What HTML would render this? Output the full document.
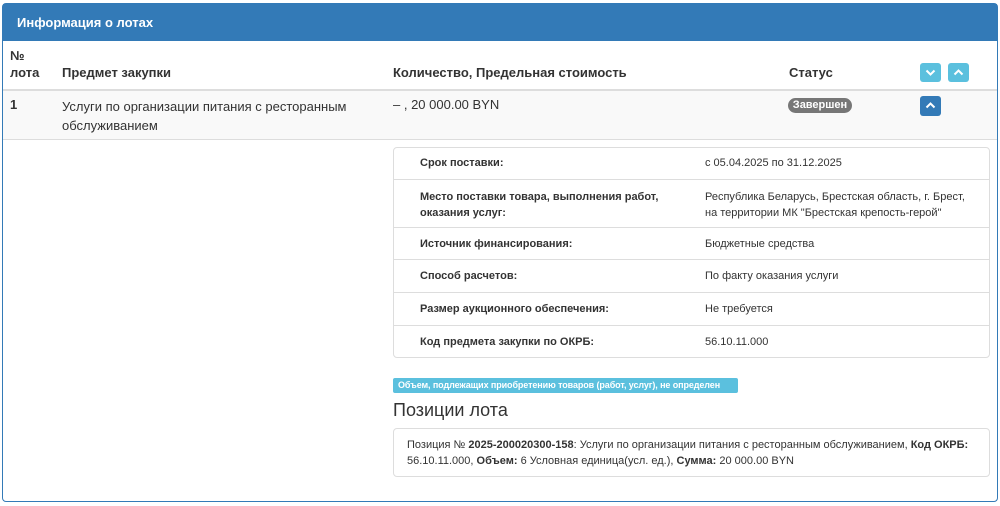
<!DOCTYPE html>
<html><head><meta charset="utf-8"><style>
*{margin:0;padding:0;box-sizing:border-box}
body{width:1000px;height:506px;background:#fff;font-family:"Liberation Sans",Arial,sans-serif;color:#333;position:relative;overflow:hidden}
.a{position:absolute;white-space:nowrap}
.panel{position:absolute;left:2px;top:3px;width:996px;height:499px;border:1px solid #337ab7;border-radius:4px}
.hd{position:absolute;left:0;top:0;right:0;height:37px;background:#337ab7;color:#fff;font-weight:bold;font-size:13px;padding:11px 0 0 14px}
.b{font-weight:bold}
.s13{font-size:13px}
.s11{font-size:11px}
.btn{position:absolute;width:21px;height:19px;border-radius:3px;background:#5bc0de}
.btn svg{position:absolute;left:5px;top:5px}
.line{position:absolute;height:1px;background:#ddd}
</style></head><body>
<div class="panel"><div class="hd">Информация о лотах</div></div>
<div class="a b s13" style="left:10px;top:48px">№</div>
<div class="a b s13" style="left:10px;top:65px">лота</div>
<div class="a b s13" style="left:62px;top:65px">Предмет закупки</div>
<div class="a b s13" style="left:393px;top:65px">Количество, Предельная стоимость</div>
<div class="a b s13" style="left:789px;top:65px">Статус</div>
<div class="btn" style="left:920px;top:63px"><svg width="11" height="9" viewBox="0 0 11 9"><path d="M1.5 2.5l4 4 4-4" stroke="#fff" stroke-width="2" fill="none"/></svg></div>
<div class="btn" style="left:948px;top:63px"><svg width="11" height="9" viewBox="0 0 11 9"><path d="M1.5 6.5l4-4 4 4" stroke="#fff" stroke-width="2" fill="none"/></svg></div>
<div class="line" style="left:3px;width:994px;top:89px;height:2px"></div>
<div class="a" style="left:3px;top:91px;width:994px;height:48px;background:#f9f9f9"></div>
<div class="line" style="left:3px;width:994px;top:139px"></div>
<div class="a b s13" style="left:10px;top:97px">1</div>
<div class="a s13" style="left:62px;top:97px;line-height:19px">Услуги по организации питания с ресторанным<br>обслуживанием</div>
<div class="a s13" style="left:393px;top:97px">– , 20 000.00 BYN</div>
<div class="a b" style="left:788px;top:98px;width:64px;height:15px;border-radius:8px;background:#777;color:#fff;font-size:11px;text-align:center;line-height:15px">Завершен</div>
<div class="btn" style="left:920px;top:96px;height:20px;background:#337ab7"><svg width="11" height="9" viewBox="0 0 11 9"><path d="M1.5 6.5l4-4 4 4" stroke="#fff" stroke-width="2" fill="none"/></svg></div>

<div class="a" style="left:393px;top:147px;width:597px;height:211px;border:1px solid #ddd;border-radius:4px"></div>
<div class="line" style="left:394px;width:595px;top:179px"></div>
<div class="line" style="left:394px;width:595px;top:227px"></div>
<div class="line" style="left:394px;width:595px;top:259px"></div>
<div class="line" style="left:394px;width:595px;top:292px"></div>
<div class="line" style="left:394px;width:595px;top:325px"></div>
<div class="a b s11" style="left:420px;top:157px">Срок поставки:</div>
<div class="a s11" style="left:705px;top:157px">с 05.04.2025 по 31.12.2025</div>
<div class="a b s11" style="left:420px;top:189px;line-height:16px">Место поставки товара, выполнения работ,<br>оказания услуг:</div>
<div class="a s11" style="left:705px;top:189px;line-height:16px">Республика Беларусь, Брестская область, г. Брест,<br>на территории МК "Брестская крепость-герой"</div>
<div class="a b s11" style="left:420px;top:238px">Источник финансирования:</div>
<div class="a s11" style="left:705px;top:238px">Бюджетные средства</div>
<div class="a b s11" style="left:420px;top:270px">Способ расчетов:</div>
<div class="a s11" style="left:705px;top:270px">По факту оказания услуги</div>
<div class="a b s11" style="left:420px;top:303px">Размер аукционного обеспечения:</div>
<div class="a s11" style="left:705px;top:303px">Не требуется</div>
<div class="a b s11" style="left:420px;top:336px">Код предмета закупки по ОКРБ:</div>
<div class="a s11" style="left:705px;top:336px">56.10.11.000</div>

<div class="a b" style="left:393px;top:378px;width:345px;height:15px;background:#5bc0de;color:#fff;font-size:9px;line-height:15px;border-radius:2px;padding-left:5px;letter-spacing:-0.1px">Объем, подлежащих приобретению товаров (работ, услуг), не определен</div>
<div class="a" style="left:393px;top:400px;font-size:18px">Позиции лота</div>
<div class="a" style="left:393px;top:428px;width:597px;height:49px;border:1px solid #ddd;border-radius:4px"></div>
<div class="a s11" style="left:407px;top:437px;line-height:16px">Позиция № <b>2025-200020300-158</b>: Услуги по организации питания с ресторанным обслуживанием, <b>Код ОКРБ:</b><br>56.10.11.000, <b>Объем:</b> 6 Условная единица(усл. ед.), <b>Сумма:</b> 20 000.00 BYN</div>
</body></html>
